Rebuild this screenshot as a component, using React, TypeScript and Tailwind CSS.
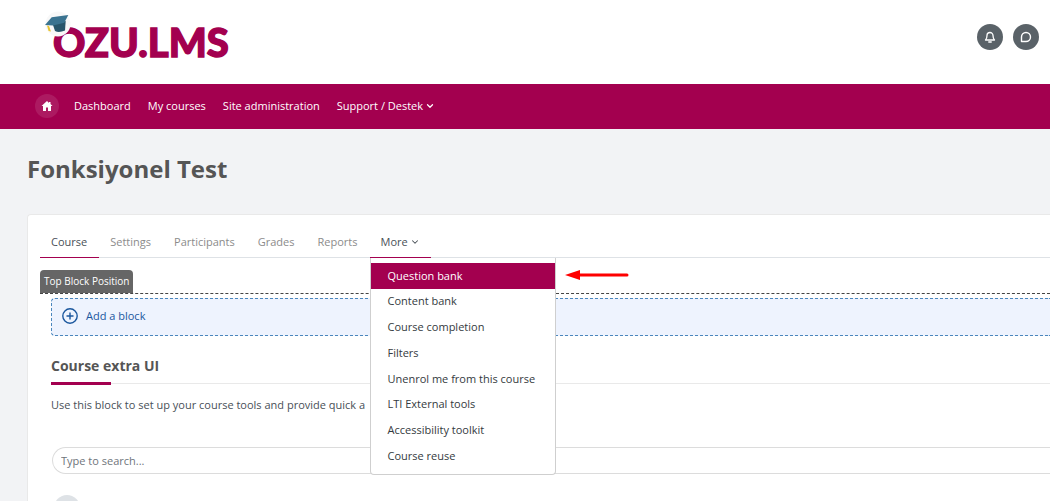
import { ChevronDown } from 'lucide-react';

interface NavLink {
  label: string;
  hasMenu?: boolean;
}

const navLinks: NavLink[] = [
  { label: 'Dashboard' },
  { label: 'My courses' },
  { label: 'Site administration' },
  { label: 'Support / Destek', hasMenu: true },
];

const tabs = ['Course', 'Settings', 'Participants', 'Grades', 'Reports'];

const moreItems = [
  'Question bank',
  'Content bank',
  'Course completion',
  'Filters',
  'Unenrol me from this course',
  'LTI External tools',
  'Accessibility toolkit',
  'Course reuse',
];

const Logo = () => (
  <a href="#" aria-label="OZU.LMS" className="block">
    <svg width="200" height="60" viewBox="0 0 200 60" className="block">
      <text
        x="9"
        y="49"
        fill="#a3004f"
        stroke="#a3004f"
        strokeWidth="1.4"
        fontSize="40"
        fontWeight="900"
        fontFamily="Lato, 'Open Sans', sans-serif"
      >
        OZU.LMS
      </text>
      <circle cx="14" cy="16" r="12.500" fill="#f8f8f8" />
      {/* Graduation cap */}
      <path d="M8.500 15 L9 17 L11 23 Q15 25 21 22.500 L21.700 13 Z" fill="#28566b" />
      <path d="M1 17 L7.700 9.300 L24.300 7 L20.300 14.700 L9 17.500 Z" fill="#3a7390" />
      <path d="M3 17.500 L5 18 L7 23.500 L4.500 23 Z" fill="#e8c533" />
    </svg>
  </a>
);

const Header = () => (
  <header className="flex h-21 items-start justify-between bg-white pl-11">
    <div className="pt-2">
      <Logo />
    </div>
    <div className="flex gap-2.5 pt-6 pr-[11px]">
      <button type="button" aria-label="Notifications" className="flex size-[26px] items-center justify-center rounded-full bg-[#5a6268] text-white">
        <svg width="12" height="12" viewBox="0 0 24 24" fill="none" stroke="currentColor" strokeWidth="2.6" strokeLinecap="round" strokeLinejoin="round">
          <path d="M3 18h18c-2-2-3-4-3-9a6 6 0 0 0-12 0c0 5-1 7-3 9Z" />
          <path d="M9.500 22h5" />
        </svg>
      </button>
      <button type="button" aria-label="Messages" className="flex size-[26px] items-center justify-center rounded-full bg-[#5a6268] text-white">
        <svg width="12" height="12" viewBox="0 0 24 24" fill="none" stroke="currentColor" strokeWidth="2.8" strokeLinecap="round" strokeLinejoin="round">
          <path d="M3 21V12a9 9 0 1 1 9 9Z" />
        </svg>
      </button>
    </div>
  </header>
);

const NavBar = () => (
  <nav className="flex h-[45px] items-center gap-[15px] bg-[#a3004f] pb-px pl-[35px] text-[11px] text-white">
    <a href="#" aria-label="Home" className="flex size-6 items-center justify-center rounded-full bg-white/10">
      <svg width="12" height="12" viewBox="0 0 24 24" fill="currentColor">
        <path d="M12 2 1 12h3v10h6v-7h4v7h6V12h3l-4-4V4h-3v2Z" />
      </svg>
    </a>
    <div className="flex gap-[17px]">
      {navLinks.map((link) => (
        <a key={link.label} href="#" className="flex items-center gap-0.5">
          {link.label}
          {link.hasMenu && <ChevronDown className="size-2.5" strokeWidth={3} />}
        </a>
      ))}
    </div>
  </nav>
);

const MoreMenu = () => (
  <div className="absolute top-full left-0 z-10 w-[186px] rounded-b-sm border border-t-0 border-[#cfcfcf] bg-white py-[5px]">
    <ul className="grid h-[206px] auto-rows-fr">
      {moreItems.map((item, index) => (
        <li key={item} className="flex">
          <a
            href="#"
            className={`flex flex-1 items-center pl-[17px] whitespace-nowrap ${
              index === 0 ? 'bg-[#a3004f] text-white' : 'text-[#343a40]'
            }`}
          >
            {item}
          </a>
        </li>
      ))}
    </ul>
    {/* Pointer to the first entry */}
    <svg width="64" height="12" viewBox="0 0 64 12" className="absolute top-[11px] left-[194px]">
      <path d="M12 6H62" stroke="#fe0000" strokeWidth="3" strokeLinecap="round" />
      <path d="M0 6 15 1v10Z" fill="#fe0000" />
    </svg>
  </div>
);

const CourseTabs = () => (
  <div className="flex h-[31px] border-b border-[#dee2e6] text-[11px]">
    {tabs.map((tab, index) => (
      <a
        key={tab}
        href="#"
        className={`-mb-px border-b pt-[7px] pr-3 pl-[11px] leading-4 ${
          index === 0 ? 'border-[#a3004f] text-[#495057]' : 'border-transparent text-[#8b8b8b]'
        }`}
      >
        {tab}
      </a>
    ))}
    <div className="relative -mb-px">
      <button type="button" aria-expanded="true" className="flex h-full items-start gap-0.5 border-b border-[#a3004f] px-[11px] pt-[7px] leading-4 text-[#495057]">
        More
        <ChevronDown className="mt-[3px] size-2.5" strokeWidth={2.5} />
      </button>
      <MoreMenu />
    </div>
  </div>
);

const App = () => {
  return (
    <div className="h-screen overflow-hidden bg-[#f2f3f5] font-['Open_Sans',sans-serif] text-[#495057]">
      <Header />
      <NavBar />

      <main className="pl-[27px]">
        <h1 className="pt-6 pb-[29px] text-2xl font-bold text-[#555]">Fonksiyonel Test</h1>

        <div className="rounded-tl border-t border-l border-[#e9e9e9] bg-white pt-3 pb-10 pl-3">
          <CourseTabs />

          {/* Block region */}
          <section className="mt-3">
            <div className="flex border-b border-dashed border-[#444]">
              <span className="rounded-t-sm bg-[#666] px-1 text-[10px] leading-[23px] text-white">Top Block Position</span>
            </div>

            <div className="pl-[11px]">
              <a href="#" className="mt-1 flex h-[38px] items-center gap-2 rounded-l-sm border border-r-0 border-dashed border-[#4a86bd] bg-[#eef3fe] pb-0.5 pl-2.5 text-[11px] text-[#1b579e]">
                <svg width="16" height="16" viewBox="0 0 16 16" fill="none" stroke="currentColor" strokeWidth="1.4">
                  <circle cx="8" cy="8" r="7.2" />
                  <path d="M8 4.500v7M4.500 8h7" />
                </svg>
                Add a block
              </a>

              <h2 className="mt-5 text-sm font-bold text-[#555]">Course extra UI</h2>
              <div className="mt-1.5 flex items-center">
                <div className="h-[3px] w-15 bg-[#a3004f]" />
                <div className="h-px flex-1 bg-[#e9e9e9]" />
              </div>
              <p className="mt-3 text-[11px] leading-4">
                Use this block to set up your course tools and provide quick a
              </p>

              <input
                type="text"
                aria-label="Search"
                placeholder="Type to search..."
                className="mt-[34px] ml-px block h-[27px] w-full rounded-l-full border border-r-0 border-[#dcdcdc] pl-2 text-[11px] placeholder:text-[#6f757b]"
              />
              <div className="mt-[21px] ml-[3px] size-[26px] rounded-full bg-[#dee2e6]" />
            </div>
          </section>
        </div>
      </main>
    </div>
  );
};

export default App;
